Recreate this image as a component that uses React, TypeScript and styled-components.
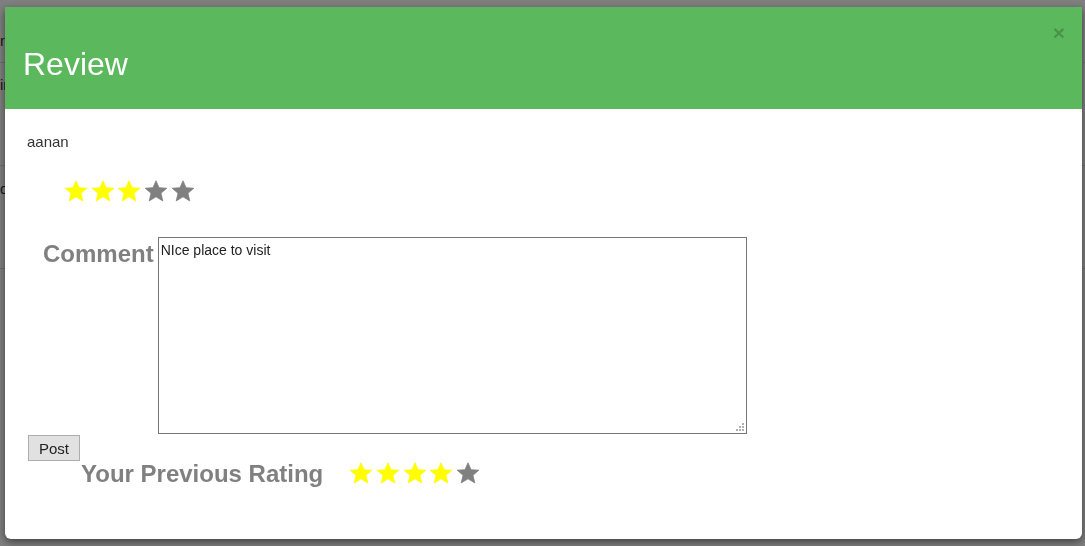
import styled, { createGlobalStyle } from 'styled-components';

const GlobalStyle = createGlobalStyle`
  html, body {
    margin: 0;
    padding: 0;
    background: #fff;
    font-family: "Liberation Sans", Arial, sans-serif;
    color: #333;
    overflow: hidden;
  }
  * { box-sizing: border-box; }
`;

const Page = styled.div`
  width: 1085px;
  height: 546px;
`;

const BgRow = styled.div<{ $h: number; $pt: number }>`
  height: ${(p) => p.$h}px;
  padding-top: ${(p) => p.$pt}px;
  border-bottom: 1px solid #ddd;
  font-size: 15px;
  color: #333;
  white-space: nowrap;
`;

const Overlay = styled.div`
  position: fixed;
  inset: 0;
  background: rgba(0, 0, 0, 0.5);
  padding: 7px 3px 7px 5px;
`;

const Modal = styled.div`
  width: 1077px;
  height: 532px;
  background: #fff;
  border-radius: 0 0 6px 6px;
  box-shadow: 0 3px 9px rgba(0, 0, 0, 0.5);
  display: flex;
  flex-direction: column;
  overflow: hidden;
`;

const Header = styled.div`
  height: 102px;
  background: #5cb85c;
  display: flex;
  align-items: flex-start;
  padding: 15px 17px 0 18px;
`;

const Title = styled.h4`
  margin: 25px 0 0 0;
  font-size: 32px;
  font-weight: normal;
  line-height: 1.1;
  color: #fff;
`;

const Close = styled.button`
  margin-left: auto;
  border: 0;
  background: transparent;
  padding: 0;
  font-family: "Liberation Sans", Arial, sans-serif;
  font-size: 21px;
  font-weight: bold;
  line-height: 1;
  color: #000;
  opacity: 0.2;
  cursor: pointer;
`;

const Body = styled.div`
  padding: 0 22px;
  display: flex;
  flex-direction: column;
  align-items: flex-start;
`;

const Name = styled.div`
  margin-top: 22px;
  font-size: 15px;
  line-height: 21px;
`;

const Stars = styled.div<{ $ml?: number }>`
  display: flex;
  gap: 2.7px;
  margin-left: ${(p) => p.$ml ?? 0}px;
`;

const StarRow = styled(Stars)`
  margin-top: 28px;
`;

const CommentRow = styled.div`
  display: flex;
  align-items: flex-start;
  margin-top: 35px;
  margin-left: 16px;
`;

const Heading = styled.h3`
  margin: 0;
  font-size: 24px;
  font-weight: bold;
  line-height: 1.1;
  color: #808080;
`;

const CommentLabel = styled(Heading)`
  margin-top: 4px;
  margin-right: 4px;
`;

const TextArea = styled.textarea`
  width: 589px;
  height: 197px;
  border: 1px solid #767676;
  padding: 4px 2px 2px;
  font-family: "Liberation Sans", Arial, sans-serif;
  font-size: 14px;
  line-height: 1.2;
  color: #222;
  outline: none;

  &::-webkit-resizer {
    background-color: transparent;
    background-image:
      linear-gradient(#b0b0b0, #b0b0b0),
      linear-gradient(#b0b0b0, #b0b0b0),
      linear-gradient(#b0b0b0, #b0b0b0),
      linear-gradient(#b0b0b0, #b0b0b0),
      linear-gradient(#b0b0b0, #b0b0b0),
      linear-gradient(#b0b0b0, #b0b0b0);
    background-size: 2px 2px;
    background-repeat: no-repeat;
    background-position:
      right 2px bottom 2px,
      right 2px bottom 5px,
      right 2px bottom 8px,
      right 5px bottom 2px,
      right 5px bottom 5px,
      right 8px bottom 2px;
  }
`;

const PostButton = styled.button`
  margin-top: 1px;
  margin-left: 1px;
  width: 52px;
  height: 26px;
  padding: 0;
  background: #e1e1e1;
  border: 1px solid #adadad;
  border-radius: 0;
  font-family: "Liberation Sans", Arial, sans-serif;
  font-size: 15px;
  color: #222;
`;

const PrevRow = styled.div`
  display: flex;
  align-items: flex-end;
  gap: 26px;
  margin-left: 54px;
`;

const PrevStars = styled(Stars)`
  margin-bottom: 3px;
`;

const Star = ({ on }: { on: boolean }) => (
  <svg width="24" height="22" viewBox="0 0 24 23">
    <polygon
      points="12,0.8 15.2,8.0 23.3,8.6 17.2,13.9 19.1,21.9 12,17.6 4.9,21.9 6.8,13.9 0.7,8.6 8.8,8.0"
      fill={on ? '#ffff00' : '#808080'}
      stroke={on ? '#ffff00' : '#808080'}
      strokeWidth="0.8"
      strokeLinejoin="round"
    />
  </svg>
);

const Rating = ({ value }: { value: number }) => (
  <>
    {[1, 2, 3, 4, 5].map((i) => (
      <Star key={i} on={i <= value} />
    ))}
  </>
);

export default function App() {
  return (
    <>
      <GlobalStyle />
      <Page>
        <BgRow $h={63} $pt={32}>name</BgRow>
        <BgRow $h={103} $pt={13}>info</BgRow>
        <BgRow $h={103} $pt={14}>date</BgRow>
      </Page>
      <Overlay>
        <Modal>
          <Header>
            <Title>Review</Title>
            <Close aria-label="Close">×</Close>
          </Header>
          <Body>
            <Name>aanan</Name>
            <StarRow $ml={37}>
              <Rating value={3} />
            </StarRow>
            <CommentRow>
              <CommentLabel>Comment</CommentLabel>
              <TextArea defaultValue="NIce place to visit" spellCheck={false} />
            </CommentRow>
            <PostButton>Post</PostButton>
            <PrevRow>
              <Heading>Your Previous Rating</Heading>
              <PrevStars>
                <Rating value={4} />
              </PrevStars>
            </PrevRow>
          </Body>
        </Modal>
      </Overlay>
    </>
  );
}
